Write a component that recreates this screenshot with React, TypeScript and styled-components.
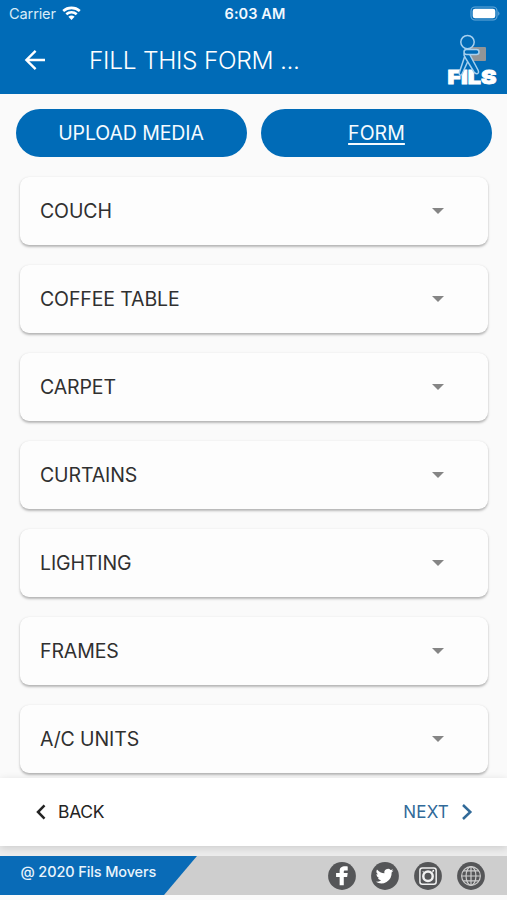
import React from "react";
import styled, { createGlobalStyle } from "styled-components";

const GlobalStyle = createGlobalStyle`
  * { box-sizing: border-box; }
  body { margin: 0; background: #fafafa; font-family: Inter, Roboto, sans-serif; }
  button { font: inherit; border: 0; background: none; padding: 0; margin: 0; }
`;

const Screen = styled.div`
  width: 507px;
  height: 900px;
  display: flex;
  flex-direction: column;
  overflow: hidden;
  background: #fafafa;
`;

const Header = styled.header`
  height: 93.5px;
  flex: none;
  background: #006bb7;
  color: #fff;
`;

const StatusBar = styled.div`
  display: grid;
  grid-template-columns: 1fr auto 1fr;
  align-items: center;
  height: 27px;
  padding: 0 6px 0 9px;
  font-size: 14.6px;
`;

const Carrier = styled.div`
  display: flex;
  align-items: center;
  gap: 6px;
  color: #d9ebf8;
  letter-spacing: -0.15px;
`;

const Clock = styled.div`
  font-size: 14.5px;
  font-weight: 600;
  letter-spacing: 0.1px;
  color: #f2f9ff;
`;

const Battery = styled.svg`
  justify-self: end;
`;

const AppBar = styled.div`
  display: flex;
  align-items: center;
  height: 66px;
  padding: 0 6px 0 24px;
`;

const Title = styled.h1`
  flex: 1;
  margin: 0 0 1px 42px;
  font-size: 24.5px;
  font-weight: 300;
  letter-spacing: -0.3px;
  white-space: nowrap;
`;

const Tabs = styled.nav`
  display: grid;
  grid-template-columns: 231px 231px;
  gap: 14.5px;
  flex: none;
  padding: 15px 0 0 15.5px;
`;

const Tab = styled.button<{ $active?: boolean }>`
  height: 48.5px;
  border-radius: 25px;
  background: #006bb7;
  color: #f5fbff;
  font-size: 19.5px;
  letter-spacing: ${(p) => (p.$active ? "0.05px" : "-0.1px")};
  text-decoration: ${(p) => (p.$active ? "underline" : "none")};
  text-decoration-thickness: 1.5px;
  text-underline-offset: 3px;
  text-decoration-skip-ink: none;
`;

const List = styled.main`
  flex: 1;
  min-height: 0;
  display: flex;
  flex-direction: column;
  gap: 20px;
  padding: 20px 19.5px 0 20px;
  overflow: hidden;
`;

const Card = styled.section`
  display: flex;
  align-items: center;
  justify-content: space-between;
  flex: none;
  height: 68px;
  padding: 0 43.5px 1px 20px;
  border-radius: 9px;
  background: #fdfdfd;
  box-shadow: 0 1.5px 2.5px rgba(0, 0, 0, 0.25), 0 1px 2px rgba(0, 0, 0, 0.05);
  color: #303030;
  font-size: 19.5px;
  letter-spacing: -0.12px;
`;

const StepBar = styled.div`
  display: flex;
  align-items: center;
  justify-content: space-between;
  flex: none;
  height: 68px;
  padding: 0 34px 1px 35px;
  background: #fff;
  box-shadow: 0 2px 8px rgba(0, 0, 0, 0.14);
  z-index: 1;
`;

const Step = styled.button<{ $next?: boolean }>`
  display: flex;
  align-items: center;
  gap: ${(p) => (p.$next ? "12px" : "11px")};
  color: ${(p) => (p.$next ? "#316a99" : "#242424")};
  font-size: ${(p) => (p.$next ? "17px" : "17.5px")};
  letter-spacing: ${(p) => (p.$next ? "0.2px" : "-0.3px")};
`;

const Footer = styled.footer`
  display: flex;
  justify-content: space-between;
  flex: none;
  height: 39px;
  margin: 10px 0 5px;
  background: #cecece;
  box-shadow: 0 -10px 0 #ededed;
`;

const Copyright = styled.div`
  width: 197px;
  padding: 6px 0 0 20.5px;
  background: #096bb7;
  clip-path: polygon(0 0, 100% 0, 164px 100%, 0 100%);
  color: #e9f4fc;
  font-size: 14.5px;
  line-height: 20px;
  font-weight: 500;
  letter-spacing: -0.12px;
  white-space: nowrap;
`;

const Socials = styled.div`
  display: flex;
  align-items: center;
  gap: 15px;
  padding-right: 22px;
`;

const items = ["COUCH", "COFFEE TABLE", "CARPET", "CURTAINS", "LIGHTING", "FRAMES", "A/C UNITS"];

const Wifi = () => (
  <svg width="19" height="15" viewBox="0 0 19 15" fill="none" stroke="#fff" strokeWidth="2.6">
    <path d="M1.2 5C5.9.8 13.1.8 17.8 5M4.3 8.3c3-2.7 7.4-2.7 10.4 0" />
    <path d="M9.5 14 6.4 10.8q3.1-2.4 6.2 0Z" fill="#fff" stroke="none" />
  </svg>
);

const BackArrow = () => (
  <svg width="23" height="22" viewBox="0 0 23 22" fill="none" stroke="#fff" strokeWidth="2.4">
    <path d="M21 11H3M11.6 1.8 2.4 11l9.2 9.2" />
  </svg>
);

const Logo = () => (
  <svg width="54" height="58" viewBox="0 -4 54 58">
    <rect x="22" y="12" width="17" height="14" rx="1" fill="#929597" />
    <text x="0.4" y="48.5" textLength="49" lengthAdjust="spacingAndGlyphs" fill="#fff" stroke="#fff" strokeWidth=".8" fontFamily="Inter, sans-serif" fontSize="19" fontWeight="900">FILS</text>
    <g fill="#006bb7" stroke="#a6d0ef" strokeWidth="1.5">
      <circle cx="20.5" cy="7.1" r="6.7" />
      <path d="m17.5 22-5 15c-1 4 2 4 3 1l6-13Z" />
      <path d="M17 20c0-3 4-4 6 0l8 15c2 4-2 5-4 2l-8-13Z" />
      <rect x="17" y="14.6" width="15" height="5" rx="2.5" />
    </g>
  </svg>
);

const Chevron = ({ next = false }: { next?: boolean }) => (
  <svg width="12" height="18" viewBox="0 0 12 18" fill="none" stroke="currentColor" strokeWidth="2.5">
    <path d={next ? "m2 2 7.3 7L2 16" : "M9.5 2.4 3 9l6.5 6.6"} />
  </svg>
);

const socialArt: Record<string, React.ReactNode> = {
  facebook: <path fill="#fff" d="M11.8 23.7v-8.4H8.2v-4.2h3.6V9.3c0-4 2.4-5.4 8.2-4.8v4h-2.4c-1.3 0-1.6.5-1.6 1.5v1.1h4l-.6 4.2H16v8.4Z" />,
  twitter: <path fill="#fff" transform="translate(5.1 5) scale(.75)" d="M23.6 4.9c-.9.4-1.8.7-2.8.8a4.9 4.9 0 0 0 2.1-2.7c-.9.6-2 1-3.1 1.2a4.9 4.9 0 0 0-8.4 4.5A13.9 13.9 0 0 1 1.3 3.6a4.9 4.9 0 0 0 1.5 6.5 4.8 4.8 0 0 1-2.2-.6 4.9 4.9 0 0 0 3.9 4.9c-.7.2-1.5.2-2.2.1a4.9 4.9 0 0 0 4.6 3.4A9.9 9.9 0 0 1-.3 20a13.9 13.9 0 0 0 21.4-12.4c1-.7 1.8-1.6 2.5-2.7Z" />,
  instagram: (
    <g fill="none" stroke="#f1f1f1" strokeWidth="1.5">
      <rect x="6" y="6" width="16.5" height="16.5" rx="2.5" />
      <circle cx="14.2" cy="14.4" r="4.8" strokeWidth="2.5" />
      <path d="m8.8 9.2 2 2M17.8 11l2-2" strokeWidth="1" />
      <rect x="18.8" y="8" width="1.5" height="1.5" fill="#fff" stroke="none" />
    </g>
  ),
  globe: (
    <g fill="none" stroke="#cecece" strokeWidth="1.2">
      <circle cx="14.2" cy="14.2" r="9.5" />
      <ellipse cx="14.2" cy="14.2" rx="5" ry="9.5" />
      <path d="M14.2 5v18.5M5 14.2h18.5M6.5 9h15.4M6.5 19.2h15.4" />
    </g>
  ),
};

const Social = ({ name }: { name: string }) => (
  <svg width="28" height="28" viewBox="0 0 28.4 28.4" aria-label={name}>
    <circle cx="14.2" cy="14.2" r="14.1" fill="#555658" />
    {socialArt[name]}
  </svg>
);

export default function App() {
  return (
    <>
      <GlobalStyle />
      <Screen>
        <Header>
          <StatusBar>
            <Carrier>Carrier <Wifi /></Carrier>
            <Clock>6:03 AM</Clock>
            <Battery width="31" height="15" viewBox="0 0 31 15">
              <rect x="1" y="1" width="26" height="13" rx="4" fill="none" stroke="#67a9da" strokeWidth="1.1" />
              <rect x="2.7" y="2.7" width="22.6" height="9.6" rx="2.4" fill="#fff" />
              <path d="M28.4 5.2q2 2.3 0 4.6Z" fill="#80b9e3" />
            </Battery>
          </StatusBar>
          <AppBar>
            <BackArrow />
            <Title>FILL THIS FORM ...</Title>
            <Logo />
          </AppBar>
        </Header>
        <Tabs>
          <Tab>UPLOAD MEDIA</Tab>
          <Tab $active>FORM</Tab>
        </Tabs>
        <List>
          {items.map((item) => (
            <Card key={item}>
              {item}
              <svg width="12" height="6" viewBox="0 0 12 6"><path d="M0 0h12L6 6Z" fill="#858585" /></svg>
            </Card>
          ))}
        </List>
        <StepBar>
          <Step><Chevron />BACK</Step>
          <Step $next>NEXT<Chevron next /></Step>
        </StepBar>
        <Footer>
          <Copyright>@ 2020 Fils Movers</Copyright>
          <Socials>
            {Object.keys(socialArt).map((name) => <Social key={name} name={name} />)}
          </Socials>
        </Footer>
      </Screen>
    </>
  );
}
